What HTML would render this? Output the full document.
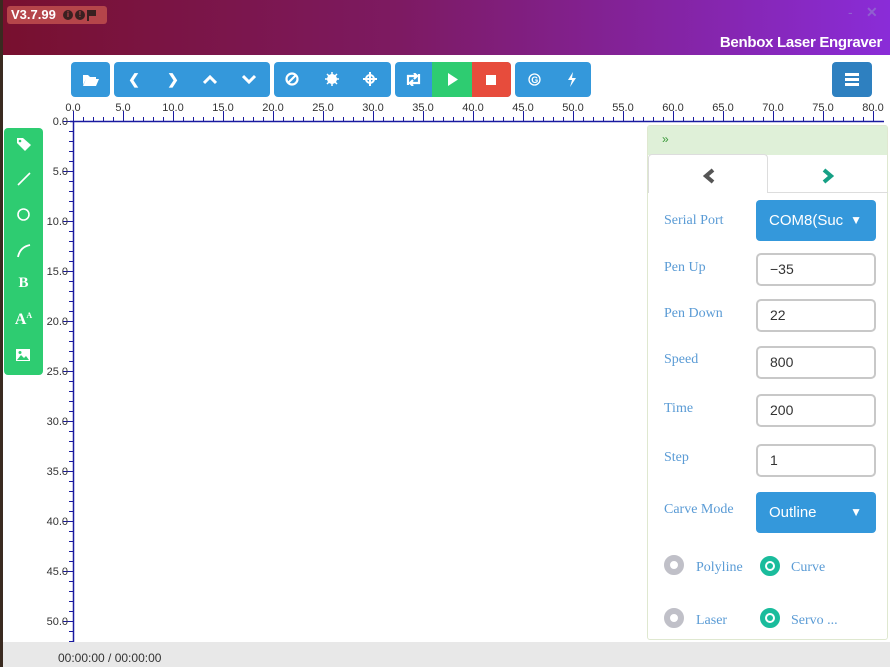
<!DOCTYPE html>
<html><head><meta charset="utf-8"><style>
*{margin:0;padding:0;box-sizing:border-box}
body{width:890px;height:667px;overflow:hidden;background:#fff;font-family:"Liberation Sans",sans-serif;position:relative}
.title{position:absolute;left:0;top:0;width:890px;height:55px;background:linear-gradient(90deg,#78102e 0%,#7d1a62 45%,#8a2cd8 100%)}
.lb{position:absolute;left:0;top:0;width:3px;height:667px;background:#3a2a20}
.badge{position:absolute;left:7px;top:6px;width:100px;height:18px;background:#b5454a;border-radius:3px;color:#fff;font-weight:bold;font-size:13px;line-height:18px;padding-left:4px}
.dot{position:absolute;top:4px;width:10px;height:10px;border-radius:50%;background:#3a2020;color:#b5454a;font-size:8px;line-height:10px;text-align:center}
.app{position:absolute;right:8px;top:34px;color:#fff;font-weight:bold;font-size:15px;letter-spacing:-0.3px}
.wc{position:absolute;top:4px;color:#9060d0;font-size:14px}
.btn{position:absolute;top:62px;height:35px;background:#3498db;border-radius:4px;color:#fff}
.ic{position:absolute;top:0;height:35px;line-height:35px;text-align:center;font-size:14px;font-weight:bold}
.side{position:absolute;left:4px;top:128px;width:39px;height:247px;background:#2ecc71;border-radius:4px;color:#fff}
.side div{position:absolute;left:0;width:39px;text-align:center;font-size:15px;font-weight:bold;font-family:"Liberation Serif",serif}
.panel{position:absolute;left:647px;top:125px;width:241px;height:515px;border:1px solid #dfe8d0;border-radius:3px;background:#fff}
.ph{height:29px;background:#dff0d8;color:#3c9a3c;font-size:12px;padding:6px 14px}
.tab{position:absolute;top:28px;height:39px}
.lab{position:absolute;left:16px;color:#5a9bd5;font-family:"Liberation Serif",serif;font-size:14px}
.inp{position:absolute;left:108px;width:120px;height:33px;border:2px solid #c8c8c8;border-radius:5px;font-size:14px;color:#333;padding-left:12px;line-height:29px}
.sel{position:absolute;left:108px;width:120px;height:41px;background:#3498db;border-radius:4px;color:#fff;font-size:15px;line-height:41px;padding-left:13px}
.sel span{position:absolute;right:14px;top:0;font-size:12px}
.rad{position:absolute;width:20px;height:20px;border-radius:50%}
.rg{border:6px solid #c0c0c8}
.rs{border:5px solid #1abc9c}
.rs::after{content:"";position:absolute;left:2px;top:2px;width:6px;height:6px;border-radius:50%;background:#1abc9c}
.status{position:absolute;left:3px;top:642px;width:887px;height:25px;background:#e8e8e8;font-size:12px;color:#333;padding:10px 0 0 55px;line-height:13px}
svg text{font-family:"Liberation Sans",sans-serif;font-size:11px;fill:#333}
</style></head><body>
<div class="title"></div>
<div class="badge">V3.7.99
<div class="dot" style="left:56px">i</div><div class="dot" style="left:68px">!</div>
<div style="position:absolute;left:80px;top:4px;width:2px;height:11px;background:#3a2020"></div><div style="position:absolute;left:82px;top:4px;width:7px;height:6px;background:#3a2020"></div></div>
<div class="wc" style="left:848px">-</div><div class="wc" style="left:866px;font-weight:bold">✕</div>
<div class="app">Benbox Laser Engraver</div>

<div class="btn" style="left:71px;width:39px"><svg style="position:absolute;left:12px;top:11px" width="16" height="13"><path d="M0 2h5l2 2h6v2H3L0 12z M3 6h13l-3 7H0z" fill="#fff"/></svg></div>
<div class="btn" style="left:114px;width:156px">
<div class="ic" style="left:10px;width:20px">❮</div><div class="ic" style="left:49px;width:20px">❯</div>
<svg style="position:absolute;left:89px;top:13px" width="14" height="10"><path d="M1 8l6-6 6 6" stroke="#fff" stroke-width="3" fill="none"/></svg>
<svg style="position:absolute;left:128px;top:12px" width="14" height="10"><path d="M1 2l6 6 6-6" stroke="#fff" stroke-width="3" fill="none"/></svg></div>
<div class="btn" style="left:274px;width:117px">
<svg style="position:absolute;left:11px;top:10px" width="14" height="14"><circle cx="7" cy="7" r="5.5" stroke="#fff" stroke-width="2.2" fill="none"/><path d="M3 11L11 3" stroke="#fff" stroke-width="2.2"/></svg>
<svg style="position:absolute;left:51px;top:10px" width="14" height="14"><circle cx="7" cy="7" r="5" fill="#fff"/><path d="M7 0v14M0 7h14M2 2l10 10M12 2L2 12" stroke="#fff" stroke-width="1.5"/></svg>
<svg style="position:absolute;left:89px;top:10px" width="14" height="14"><circle cx="7" cy="7" r="4" stroke="#fff" stroke-width="2" fill="none"/><path d="M7 0v14M0 7h14" stroke="#fff" stroke-width="2"/></svg></div>
<div class="btn" style="left:395px;width:116px;background:#3498db">
<div style="position:absolute;left:37px;top:0;width:40px;height:35px;background:#2ecc71"></div>
<div style="position:absolute;left:77px;top:0;width:39px;height:35px;background:#e74c3c;border-radius:0 4px 4px 0"></div>
<svg style="position:absolute;left:10px;top:11px" width="17" height="13"><path d="M3 12V3h9M9 0l3 3-3 3M14 1v9H5M8 13l-3-3 3-3" stroke="#fff" stroke-width="2.2" fill="none"/></svg>
<svg style="position:absolute;left:53px;top:11px" width="10" height="13"><path d="M0 0l10 6.5L0 13z" fill="#fff"/></svg>
<div style="position:absolute;left:91px;top:13px;width:10px;height:10px;background:#fff"></div></div>
<div class="btn" style="left:515px;width:76px">
<svg style="position:absolute;left:13px;top:11px" width="13" height="13"><circle cx="6.5" cy="6.5" r="5.5" stroke="#fff" stroke-width="1.3" fill="none"/><text x="3.3" y="10" style="font-size:9px;fill:#fff;font-weight:bold">G</text></svg>
<svg style="position:absolute;left:52px;top:10px" width="10" height="15"><path d="M6 0L1 8h4l-2 7 6-9H5z" fill="#fff"/></svg></div>
<div class="btn" style="left:832px;width:40px;background:#2e80c0">
<div style="position:absolute;left:13px;top:11px;width:14px;height:3px;background:#fff"></div><div style="position:absolute;left:13px;top:16px;width:14px;height:3px;background:#fff"></div><div style="position:absolute;left:13px;top:21px;width:14px;height:3px;background:#fff"></div></div>

<svg style="position:absolute;left:0;top:95px" width="890" height="550">
<defs>
<pattern id="hx" x="73" y="0" width="10" height="550" patternUnits="userSpaceOnUse"><line x1="0.5" y1="22" x2="0.5" y2="26" stroke="#1a1aa0"/></pattern>
<pattern id="hX" x="73" y="0" width="50" height="550" patternUnits="userSpaceOnUse"><line x1="0.5" y1="16" x2="0.5" y2="26" stroke="#1a1aa0"/></pattern>
<pattern id="vy" x="0" y="26" width="890" height="10" patternUnits="userSpaceOnUse"><line x1="69" y1="0.5" x2="73" y2="0.5" stroke="#1a1aa0"/></pattern>
<pattern id="vY" x="0" y="26" width="890" height="50" patternUnits="userSpaceOnUse"><line x1="63" y1="0.5" x2="73" y2="0.5" stroke="#1a1aa0"/></pattern>
</defs>
<rect x="73" y="14" width="810" height="13" fill="url(#hx)"/>
<rect x="73" y="14" width="810" height="13" fill="url(#hX)"/>
<rect x="60" y="26" width="14" height="522" fill="url(#vy)"/>
<rect x="60" y="26" width="14" height="522" fill="url(#vY)"/>
<line x1="70" y1="26.5" x2="884" y2="26.5" stroke="#1a1aa0" stroke-width="1.5"/>
<line x1="73.5" y1="26" x2="73.5" y2="548" stroke="#1a1aa0" stroke-width="1.5"/>
<g text-anchor="middle">
<text x="73" y="16">0.0</text><text x="123" y="16">5.0</text><text x="173" y="16">10.0</text><text x="223" y="16">15.0</text><text x="273" y="16">20.0</text><text x="323" y="16">25.0</text><text x="373" y="16">30.0</text><text x="423" y="16">35.0</text><text x="473" y="16">40.0</text><text x="523" y="16">45.0</text><text x="573" y="16">50.0</text><text x="623" y="16">55.0</text><text x="673" y="16">60.0</text><text x="723" y="16">65.0</text><text x="773" y="16">70.0</text><text x="823" y="16">75.0</text><text x="873" y="16">80.0</text></g>
<g text-anchor="end">
<text x="68" y="30">0.0</text><text x="68" y="80">5.0</text><text x="68" y="130">10.0</text><text x="68" y="180">15.0</text><text x="68" y="230">20.0</text><text x="68" y="280">25.0</text><text x="68" y="330">30.0</text><text x="68" y="380">35.0</text><text x="68" y="430">40.0</text><text x="68" y="480">45.0</text><text x="68" y="530">50.0</text></g>
</svg>

<div class="side">
<svg style="position:absolute;left:13px;top:10px" width="14" height="13"><path d="M0 0h6l8 7-6 6-8-8z" fill="#fff"/><circle cx="3" cy="3" r="1.3" fill="#2ecc71"/></svg>
<svg style="position:absolute;left:13px;top:44px" width="14" height="14"><path d="M1 13L13 1" stroke="#fff" stroke-width="1.6"/></svg>
<svg style="position:absolute;left:12px;top:79px" width="15" height="15"><circle cx="7.5" cy="7.5" r="5.5" stroke="#fff" stroke-width="1.6" fill="none"/></svg>
<svg style="position:absolute;left:13px;top:116px" width="14" height="14"><path d="M1 13Q3 3 13 1" stroke="#fff" stroke-width="1.8" fill="none"/></svg>
<div style="top:147px">B</div>
<div style="top:183px;font-size:16px">A<span style="font-size:8px;vertical-align:top">A</span></div>
<svg style="position:absolute;left:12px;top:221px" width="14" height="12"><rect width="14" height="12" fill="#fff"/><path d="M1 11l4-5 3 3 2-2 3 4z" fill="#2ecc71"/><circle cx="4" cy="3.5" r="1.5" fill="#2ecc71"/></svg>
</div>

<div class="panel">
<div class="ph">»</div>
<div class="tab" style="left:0;width:120px;background:#fff;border:1px solid #ddd;border-bottom:none;border-radius:4px 4px 0 0"><svg style="position:absolute;left:54px;top:13px" width="12" height="16"><path d="M10 2L3 8l7 6" stroke="#555" stroke-width="4" fill="none"/></svg></div>
<div class="tab" style="left:120px;width:120px;border-bottom:1px solid #ddd"><svg style="position:absolute;left:54px;top:14px" width="12" height="16"><path d="M2 2l7 6-7 6" stroke="#16a085" stroke-width="4" fill="none"/></svg></div>
<div class="lab" style="top:87px">Serial Port</div><div class="sel" style="top:74px">COM8(Suc<span>▼</span></div>
<div class="lab" style="top:134px">Pen Up</div><div class="inp" style="top:127px">−35</div>
<div class="lab" style="top:180px">Pen Down</div><div class="inp" style="top:173px">22</div>
<div class="lab" style="top:226px">Speed</div><div class="inp" style="top:220px">800</div>
<div class="lab" style="top:275px">Time</div><div class="inp" style="top:268px">200</div>
<div class="lab" style="top:324px">Step</div><div class="inp" style="top:318px">1</div>
<div class="lab" style="top:376px">Carve Mode</div><div class="sel" style="top:366px">Outline<span>▼</span></div>
<div class="rad rg" style="left:16px;top:429px"></div><div class="lab" style="left:48px;top:434px">Polyline</div>
<div class="rad rs" style="left:112px;top:430px"></div><div class="lab" style="left:143px;top:434px">Curve</div>
<div class="rad rg" style="left:16px;top:482px"></div><div class="lab" style="left:48px;top:487px">Laser</div>
<div class="rad rs" style="left:112px;top:482px"></div><div class="lab" style="left:143px;top:487px">Servo ...</div>
</div>

<div class="status">00:00:00 / 00:00:00</div>
<div class="lb"></div>
</body></html>
